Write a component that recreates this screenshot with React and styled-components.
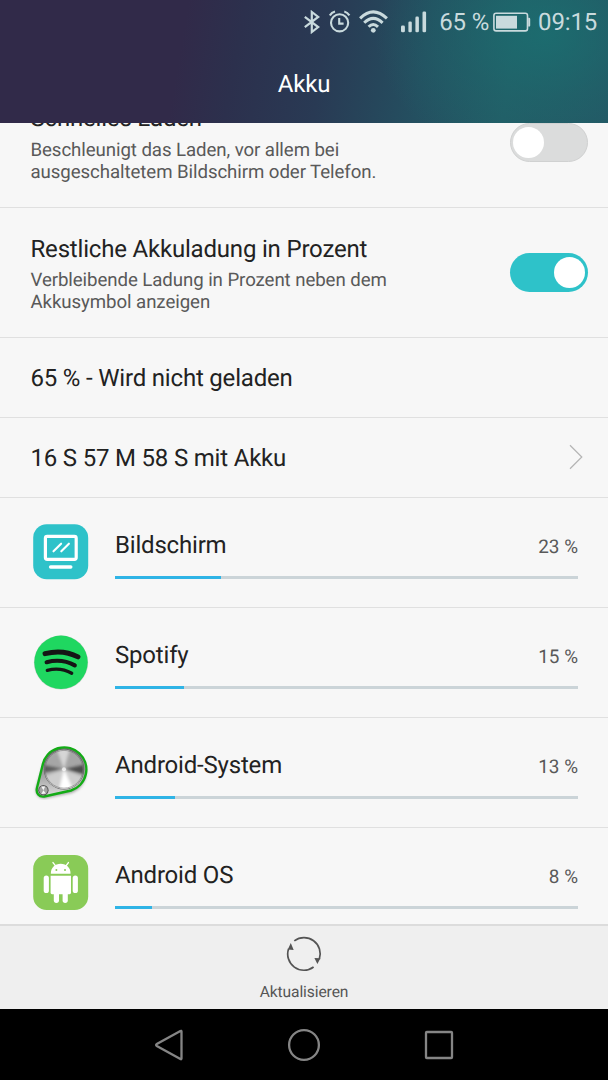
import styled, { createGlobalStyle } from "styled-components";

const apps = [
    { name: "Bildschirm", percent: 23, icon: ScreenIcon },
    { name: "Spotify", percent: 15, icon: SpotifyIcon },
    { name: "Android-System", percent: 13, icon: SystemIcon },
    { name: "Android OS", percent: 8, icon: AndroidIcon },
];

const App = () => {
    return (
        <>
            <GlobalStyle />
            <Phone>
                <Header>
                    <StatusBar />
                    <Title>Akku</Title>
                </Header>
                <List>
                    <SettingRow
                        title="Schnelles Laden"
                        lines={["Beschleunigt das Laden, vor allem bei", "ausgeschaltetem Bildschirm oder Telefon."]}
                        scrolled
                    />
                    <SettingRow
                        title="Restliche Akkuladung in Prozent"
                        lines={["Verbleibende Ladung in Prozent neben dem", "Akkusymbol anzeigen"]}
                        on
                    />
                    <InfoRow>
                        <Label>65 % - Wird nicht geladen</Label>
                    </InfoRow>
                    <InfoRow>
                        <Label>16 S 57 M 58 S mit Akku</Label>
                        <Chevron viewBox="0 0 16 26">
                            <path d="M2 1.3 L13.8 13 L2 24.7" fill="none" stroke="#b4b4b4" strokeWidth="1.2" />
                        </Chevron>
                    </InfoRow>
                    {apps.map((app) => (
                        <AppRow key={app.name}>
                            <app.icon />
                            <Usage>
                                <UsageText>
                                    <Label>{app.name}</Label>
                                    <Percent>{app.percent} %</Percent>
                                </UsageText>
                                <Track>
                                    <Bar style={{ width: `${app.percent}%` }} />
                                </Track>
                            </Usage>
                        </AppRow>
                    ))}
                </List>
                <Footer>
                    <svg width="36" height="36" viewBox="0 0 36 36">
                        <g fill="none" stroke="#545454" strokeWidth="1.7">
                            <path d="M8.3 4.9 A16.2 16.2 0 0 1 33.3 23.2" />
                            <path d="M27.6 31 A16.2 16.2 0 0 1 2.6 12.7" />
                        </g>
                        <path d="M4.8 7 L7.7 14 L1.8 13.4 Z M31.4 28 L28.4 22 L34.4 22.2 Z" fill="#545454" />
                    </svg>
                    <FooterLabel>Aktualisieren</FooterLabel>
                </Footer>
                <NavBar>
                    <svg width="30" height="34" viewBox="0 0 30 34">
                        <path d="M27.5 3.6 V30.6 Q27.5 31.7 26.4 31 L2.8 18 Q1.4 17 2.8 16 L26.4 3 Q27.5 2.4 27.5 3.6 Z" />
                    </svg>
                    <svg width="34" height="34" viewBox="0 0 34 34">
                        <circle cx="17" cy="17" r="14.9" />
                    </svg>
                    <svg width="30" height="30" viewBox="0 0 30 30">
                        <rect x="2" y="2" width="26" height="26" rx="0.8" />
                    </svg>
                </NavBar>
            </Phone>
        </>
    );
};

export default App;

const SettingRow = ({ title, lines, on, scrolled }) => {
    return (
        <Setting $scrolled={scrolled}>
            <div>
                <Label>{title}</Label>
                <Description>
                    {lines[0]}
                    <br />
                    {lines[1]}
                </Description>
            </div>
            <Switch $on={on}>
                <Knob />
            </Switch>
        </Setting>
    );
};

const StatusBar = () => {
    return (
        <Status>
            <svg width="18" height="24" viewBox="0 0 18 24">
                <path d="M1.8 6.8 L15.2 17 L8.8 22 V2 L15.2 7 L1.8 17.2" fill="none" stroke="#c9dadd" strokeWidth="2.2" />
            </svg>
            <svg width="22" height="24" viewBox="0 0 22 24">
                <g fill="none" stroke="#c9dadd" strokeWidth="2.1">
                    <circle cx="10.6" cy="12.8" r="8.6" />
                    <path d="M10.2 7.9 V13.6 H14.6" />
                    <path d="M0.9 5.4 Q2.7 2.3 6 1.4 M20.4 5.4 Q18.6 2.3 15.3 1.4" />
                </g>
            </svg>
            <svg width="30" height="24" viewBox="0 0 30 24">
                <g fill="none" stroke="#c9dadd" strokeWidth="3">
                    <path d="M1.1 8.4 Q14.2 -4.6 27.9 8.4" />
                    <path d="M5.2 12.8 Q14.2 4 23.6 12.8" />
                    <path d="M9.6 16.8 Q14.2 12.2 19 16.8" />
                </g>
                <circle cx="14.3" cy="20.3" r="2.4" fill="#c9dadd" />
            </svg>
            <svg width="26" height="24" viewBox="0 0 26 24">
                <g fill="#c9dadd">
                    <rect x="0" y="15.6" width="3.9" height="6.7" rx="1.4" />
                    <rect x="7.4" y="11.4" width="3.4" height="10.9" rx="1.3" />
                    <rect x="14.4" y="6.6" width="3.5" height="15.7" rx="1.3" />
                    <rect x="21.5" y="1.4" width="3.6" height="20.9" rx="1.3" />
                </g>
            </svg>
            <StatusText $gap="12.2px">65 %</StatusText>
            <Battery viewBox="0 0 38 24">
                <rect x="0.9" y="3.3" width="33.6" height="17.6" rx="2.2" fill="none" stroke="#c9dadd" strokeWidth="1.6" />
                <rect x="3" y="5.8" width="21" height="12.8" fill="#c9dadd" />
                <path d="M35.2 7.8 h0.8 q1.2 0 1.2 1.2 v6.4 q0 1.2 -1.2 1.2 h-0.8 Z" fill="#c9dadd" />
            </Battery>
            <StatusText $gap="7.6px">09:15</StatusText>
        </Status>
    );
};

function ScreenIcon() {
    return (
        <AppIcon viewBox="0 0 56 56">
            <rect x="0.2" y="0.2" width="55" height="55" rx="13.5" fill="#2ec2c9" />
            <g fill="none" stroke="#fff" strokeLinecap="round">
                <rect x="12.4" y="12.4" width="30.8" height="23" rx="1.8" strokeWidth="3.2" />
                <path d="M20.5 27.3 L28.1 19.7 M28.3 27.3 L35.9 19.7" strokeWidth="2.1" />
                <path d="M17.6 43 H37.8" strokeWidth="3.4" />
            </g>
        </AppIcon>
    );
}

function SpotifyIcon() {
    return (
        <AppIcon viewBox="0 0 56 56">
            <circle cx="28" cy="28.5" r="27.1" fill="#c9cfca" />
            <circle cx="28" cy="28.3" r="26.7" fill="#1fd760" />
            <g fill="none" stroke="#151515" strokeLinecap="round">
                <path d="M12 19.7 Q30 15 45 22.9" strokeWidth="4.9" />
                <path d="M13.6 28.2 Q29 24.3 41.8 31.4" strokeWidth="4.1" />
                <path d="M14.3 36.4 Q27.5 33 38.7 39.3" strokeWidth="3.3" />
            </g>
        </AppIcon>
    );
}

function SystemIcon() {
    return (
        <AppIcon viewBox="0 0 56 56">
            <defs>
                <linearGradient id="plate" x1="0" y1="0" x2="0" y2="1">
                    <stop offset="0" stopColor="#707070" />
                    <stop offset="0.5" stopColor="#9a9a9a" />
                    <stop offset="1" stopColor="#dedede" />
                </linearGradient>
                <filter id="soft" x="-20%" y="-20%" width="140%" height="140%">
                    <feGaussianBlur stdDeviation="1.8" />
                </filter>
                <clipPath id="disc">
                    <circle cx="31" cy="25.3" r="19.6" />
                </clipPath>
            </defs>
            <path d="M10 22 A22 22 0 1 1 38 49 L11 54.5 Q2 53 3 44 Z" fill="#777" opacity="0.7" filter="url(#soft)" />
            <path
                d="M9.8 20.2 A22.1 22.1 0 1 1 38 46.5 L11.2 52.5 C6 53.2 2.8 49 3.9 44.2 Z"
                fill="url(#plate)"
                stroke="#13ac16"
                strokeWidth="2.4"
            />
            <circle cx="31" cy="25.3" r="20.2" fill="#606060" />
            <g clipPath="url(#disc)">
                <rect x="10" y="4" width="43" height="43" fill="#a6a6a6" />
                <g filter="url(#soft)">
                    <path d="M31 25.3 L8 20.6 V29 Z" fill="#5a5a5a" />
                    <path d="M31 25.3 L54 20 V31 Z" fill="#4c4c4c" />
                    <path d="M31 25.3 L22 1 H38 Z" fill="#d6d6d6" />
                    <path d="M31 25.3 L8 33 L20 50 H43 L54 34 Z" fill="#cecece" />
                    <path d="M31 25.3 L25 50 H42 Z" fill="#fff" />
                </g>
                <circle cx="31" cy="25.3" r="2" fill="#fff" opacity="0.7" />
            </g>
            <circle cx="31" cy="25.3" r="18.9" fill="none" stroke="#777" strokeWidth="0.6" />
            <circle cx="10.4" cy="46.2" r="5.2" fill="#555" />
            <circle cx="10.4" cy="46.2" r="4.2" fill="#a4a4a4" />
            <path d="M10.4 46.2 L8.2 42.4 L12.2 42.6 Z M10.4 46.2 L8.4 50 L12.8 49.6 Z" fill="#f6f6f6" />
        </AppIcon>
    );
}

function AndroidIcon() {
    return (
        <AppIcon viewBox="0 0 56 56">
            <rect x="0.2" y="1" width="55" height="55" rx="13.5" fill="#89cb57" />
            <g fill="#fff">
                <path d="M17.8 19.8 C17.8 13.7 21.9 9.8 27.7 9.8 C33.4 9.8 37.6 13.7 37.6 19.8 Z" />
                <path d="M17.6 21.8 H38 V38.8 Q38 40.2 36.6 40.2 H19 Q17.6 40.2 17.6 38.8 Z" />
                <rect x="10.7" y="21.4" width="5.2" height="17.6" rx="2.6" />
                <rect x="39.7" y="21.4" width="5.2" height="17.6" rx="2.6" />
                <rect x="20.8" y="34.6" width="5.2" height="14.3" rx="2.6" />
                <rect x="29.6" y="34.6" width="5.2" height="14.3" rx="2.6" />
            </g>
            <path d="M20 8.6 L22.8 12.1 M35.4 8.6 L32.8 12.1" stroke="#fff" strokeWidth="1.4" strokeLinecap="round" />
            <circle cx="23.4" cy="16" r="1" fill="#89cb57" />
            <circle cx="32" cy="16" r="1" fill="#89cb57" />
        </AppIcon>
    );
}

const GlobalStyle = createGlobalStyle`
body {
    margin: 0;
    font-family: Roboto, "Liberation Sans", sans-serif;
    text-rendering: geometricPrecision;
}
* {
    box-sizing: border-box;
}
`;

const Phone = styled.div`
display: flex;
flex-direction: column;
width: 608px;
height: 1080px;
overflow: hidden;
background-color: #f7f7f7;
`;

const Header = styled.header`
flex: none;
height: 123px;
background:
    radial-gradient(ellipse 170px 130px at 545px 35px, #1b6e70dd 0%, #1c6c6e66 50%, #23586500 100%),
    linear-gradient(100deg, #312a49 0%, #312a49 30%, #2c304d 39%, #293a54 53%, #244f60 69%, #235c66 83%, #245664 100%);
`;

const Status = styled.div`
display: flex;
align-items: center;
height: 43px;
padding: 0 0 0 303px;

svg {
    flex: none;
}
svg:nth-child(2) {
    margin-left: 8px;
}
svg:nth-child(3) {
    margin-left: 8px;
}
svg:nth-child(4) {
    margin-left: 12px;
}
`;

const StatusText = styled.span`
margin-left: ${props => props.$gap};
padding-top: 1px;
font-size: 24px;
line-height: 28px;
letter-spacing: -0.15px;
white-space: nowrap;
color: #c9dadd;
`;

const Battery = styled.svg`
width: 38px;
height: 24px;
margin-left: 3.4px;
`;

const Title = styled.h1`
margin: 0;
padding-top: 1px;
font-size: 24px;
font-weight: 400;
line-height: 81px;
letter-spacing: -0.2px;
text-align: center;
color: #fff;
`;

const List = styled.main`
flex: none;
height: 801px;
overflow: hidden;
`;

const Row = styled.div`
display: flex;
justify-content: space-between;
border-bottom: 1px solid #e0e0e0;
`;

const Setting = styled(Row)`
height: 130px;
margin-top: ${props => (props.$scrolled ? '-45px' : '0')};
padding: ${props => (props.$scrolled ? '26px' : '27px')} 20px 0 30.5px;
`;

const InfoRow = styled(Row)`
height: 80px;
align-items: center;
padding: 1px 24px 0 30.5px;
`;

const Label = styled.div`
font-size: 24px;
line-height: 28px;
letter-spacing: -0.19px;
white-space: nowrap;
color: #222;
`;

const Description = styled.p`
margin: 6px 0 0;
font-size: 18.67px;
line-height: 22px;
letter-spacing: -0.08px;
white-space: nowrap;
color: #595959;

${Row}:first-child & {
    margin-top: 7px;
}
`;

const Switch = styled.div`
display: flex;
align-items: center;
justify-content: ${props => (props.$on ? 'flex-end' : 'flex-start')};
width: 78px;
height: 38.5px;
margin-top: ${props => (props.$on ? '18px' : '19px')};
padding: ${props => (props.$on ? '0 3.5px' : '0 2px')};
border-radius: 20px;
background-color: ${props => (props.$on ? '#2ec2c9' : '#dbdcdc')};
border: ${props => (props.$on ? 'none' : '1px solid #d0d1d1')};
`;

const Knob = styled.div`
width: 31px;
height: 31px;
border-radius: 50%;
background-color: #fff;
`;

const Chevron = styled.svg`
width: 16px;
height: 26px;
margin-top: -3px;
`;

const AppRow = styled(Row)`
height: 110px;
padding: 26px 30px 0 33px;
`;

const AppIcon = styled.svg`
flex: none;
width: 56px;
height: 56px;
`;

const Usage = styled.div`
flex: 1;
margin-left: 26px;
padding-top: 7px;
`;

const UsageText = styled.div`
display: flex;
justify-content: space-between;
align-items: baseline;
`;

const Percent = styled.span`
font-size: 18.9px;
color: #595959;
`;

const Track = styled.div`
height: 3px;
margin-top: 17px;
background-color: #cbd4d8;
`;

const Bar = styled.div`
height: 100%;
background-color: #2fb4e6;
`;

const Footer = styled.footer`
display: flex;
flex: none;
flex-direction: column;
align-items: center;
height: 85px;
padding-top: 10px;
border-top: 2px solid #dcdcdc;
background-color: #efefef;
`;

const FooterLabel = styled.span`
margin-top: 10px;
font-size: 15.6px;
line-height: 20px;
letter-spacing: -0.1px;
color: #555;
`;

const NavBar = styled.nav`
display: flex;
flex: none;
align-items: center;
justify-content: space-between;
height: 71px;
padding: 1px 154px 0;
background-color: #000;

svg {
    fill: none;
    stroke: #858585;
    stroke-width: 2.3;
}
`;
